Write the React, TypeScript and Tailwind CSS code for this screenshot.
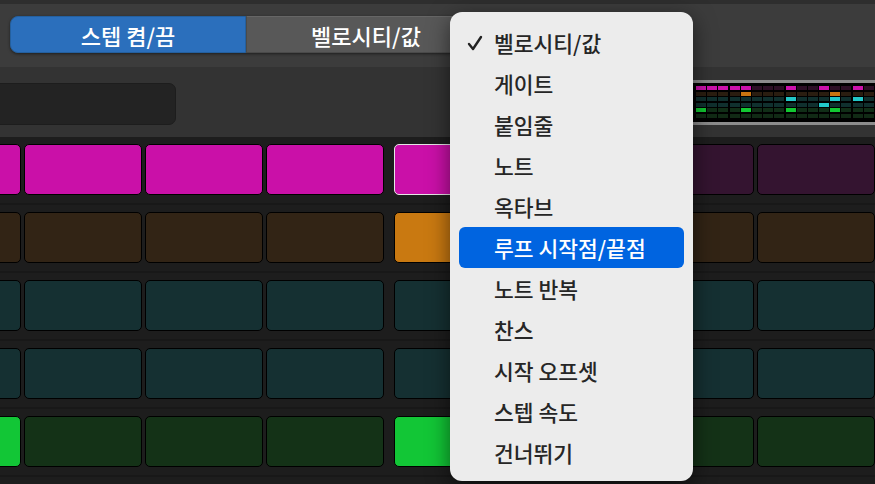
import React from 'react';

type Track = { on: string; off: string; steps: number[] };

const tracks: Track[] = [
  { on: 'bg-[#ca10a8]', off: 'bg-[#341430]', steps: [0, 1, 2, 3, 4, 8, 11, 14] },
  { on: 'bg-[#c97911]', off: 'bg-[#322415]', steps: [4, 12] },
  { on: 'bg-[#1fc6c6]', off: 'bg-[#153032]', steps: [8, 12, 14] },
  { on: 'bg-[#1fc6c6]', off: 'bg-[#153032]', steps: [11] },
  { on: 'bg-[#12c636]', off: 'bg-[#143217]', steps: [0, 4, 8, 12] },
  { on: 'bg-[#12c636]', off: 'bg-[#132a16]', steps: [] },
];

const miniColors = [
  { on: 'bg-[#cc12ac]', off: 'bg-[#2c0f25]' },
  { on: 'bg-[#c97410]', off: 'bg-[#2a1d10]' },
  { on: 'bg-[#22c8c8]', off: 'bg-[#10302e]' },
  { on: 'bg-[#22c8c8]', off: 'bg-[#10302e]' },
  { on: 'bg-[#12c832]', off: 'bg-[#112e17]' },
  { on: 'bg-[#12c832]', off: 'bg-[#112a15]' },
];

const menuItems = [
  '벨로시티/값',
  '게이트',
  '붙임줄',
  '노트',
  '옥타브',
  '루프 시작점/끝점',
  '노트 반복',
  '찬스',
  '시작 오프셋',
  '스텝 속도',
  '건너뛰기',
];

const Pad: React.FC<{ lit: boolean; track: Track; selected?: boolean }> = ({ lit, track, selected }) => (
  <div
    className={`w-[118px] h-[51px] shrink-0 rounded-[5px] border ${selected ? 'border-[#e6e6e6]' : 'border-black'} ${lit ? track.on : track.off}`}
  />
);

const App: React.FC = () => {
  return (
    <div
      className="w-[875px] h-[484px] relative overflow-hidden bg-[#1d1d1d]"
      style={{ fontFamily: '"Noto Sans CJK KR", "Noto Sans", sans-serif' }}
    >
      {/* header with segmented control */}
      <div className="h-[67px] bg-[#3c3c3c] border-t-[4px] border-[#2e2e2e] pl-[10px] pt-[12px]">
        <div className="flex h-[37px] w-[476px] rounded-[8px] shadow-[0_1px_3px_rgba(0,0,0,0.5)]">
          <div className="w-[236px] flex items-center justify-center rounded-l-[8px] bg-[#2b6fbc] border border-[#24609f] text-white text-[22px] font-medium leading-none">
            스텝 켬/끔
          </div>
          <div className="flex-1 flex items-center justify-center rounded-r-[8px] bg-[#585858] border border-[#4a4a4a] border-t-[#666] text-white text-[22px] font-medium leading-none">
            벨로시티/값
          </div>
        </div>
      </div>

      {/* toolbar row */}
      <div className="h-[70px] bg-[#333333] flex justify-between items-start">
        <div className="w-[190px] h-[42px] -ml-[14px] mt-[16px] rounded-[7px] bg-[#232323] border border-[#1d1d1d]" />
        <div className="w-[188px] h-[45px] mt-[13px] bg-black border-y-[3px] border-[#8c8c8c] pl-[9px] pt-[3px] flex flex-col gap-[1.6px]">
          {tracks.map((t, r) => (
            <div key={r} className="flex gap-[1.2px]">
              {Array.from({ length: 16 }).map((_, c) => (
                <div
                  key={c}
                  className={`w-[10px] h-[4px] shrink-0 ${t.steps.includes(c) ? miniColors[r].on : miniColors[r].off}`}
                />
              ))}
            </div>
          ))}
        </div>
      </div>

      {/* step grid */}
      <div className="flex flex-col">
        {tracks.map((t, r) => (
          <div key={r} className="h-[68px] pt-[7px] border-b-[2px] border-[#181818] flex -ml-[97px]">
            <div className="flex gap-[3px]">
              {[0, 1, 2, 3].map((c) => (
                <Pad key={c} lit={t.steps.includes(c)} track={t} />
              ))}
            </div>
            <div className="flex gap-[3px] ml-[10px]">
              {[4, 5, 6, 7].map((c) => (
                <Pad key={c} lit={t.steps.includes(c)} track={t} selected={r === 0 && c === 4} />
              ))}
            </div>
          </div>
        ))}
      </div>

      {/* popup menu */}
      <div className="absolute left-[450px] top-[12px] w-[243px] h-[469px] rounded-[12px] bg-[#ececec] pt-[10px] shadow-[0_6px_22px_rgba(0,0,0,0.55)]">
        {menuItems.map((item, i) => {
          const active = i === 5;
          return (
            <div
              key={item}
              className={`relative h-[41px] mx-[9px] rounded-[6px] flex items-center pl-[35px] text-[21.5px] font-medium leading-none ${active ? 'bg-[#0064e0] text-white' : 'text-[#262626]'}`}
            >
              {i === 0 && (
                <svg className="absolute left-[8px] top-[13px]" width="16" height="16" viewBox="0 0 16 16">
                  <path d="M2 9 L6 14 L14 2" fill="none" stroke="#222" strokeWidth="2.4" strokeLinecap="round" strokeLinejoin="round" />
                </svg>
              )}
              {item}
            </div>
          );
        })}
      </div>
    </div>
  );
};

export default App;
